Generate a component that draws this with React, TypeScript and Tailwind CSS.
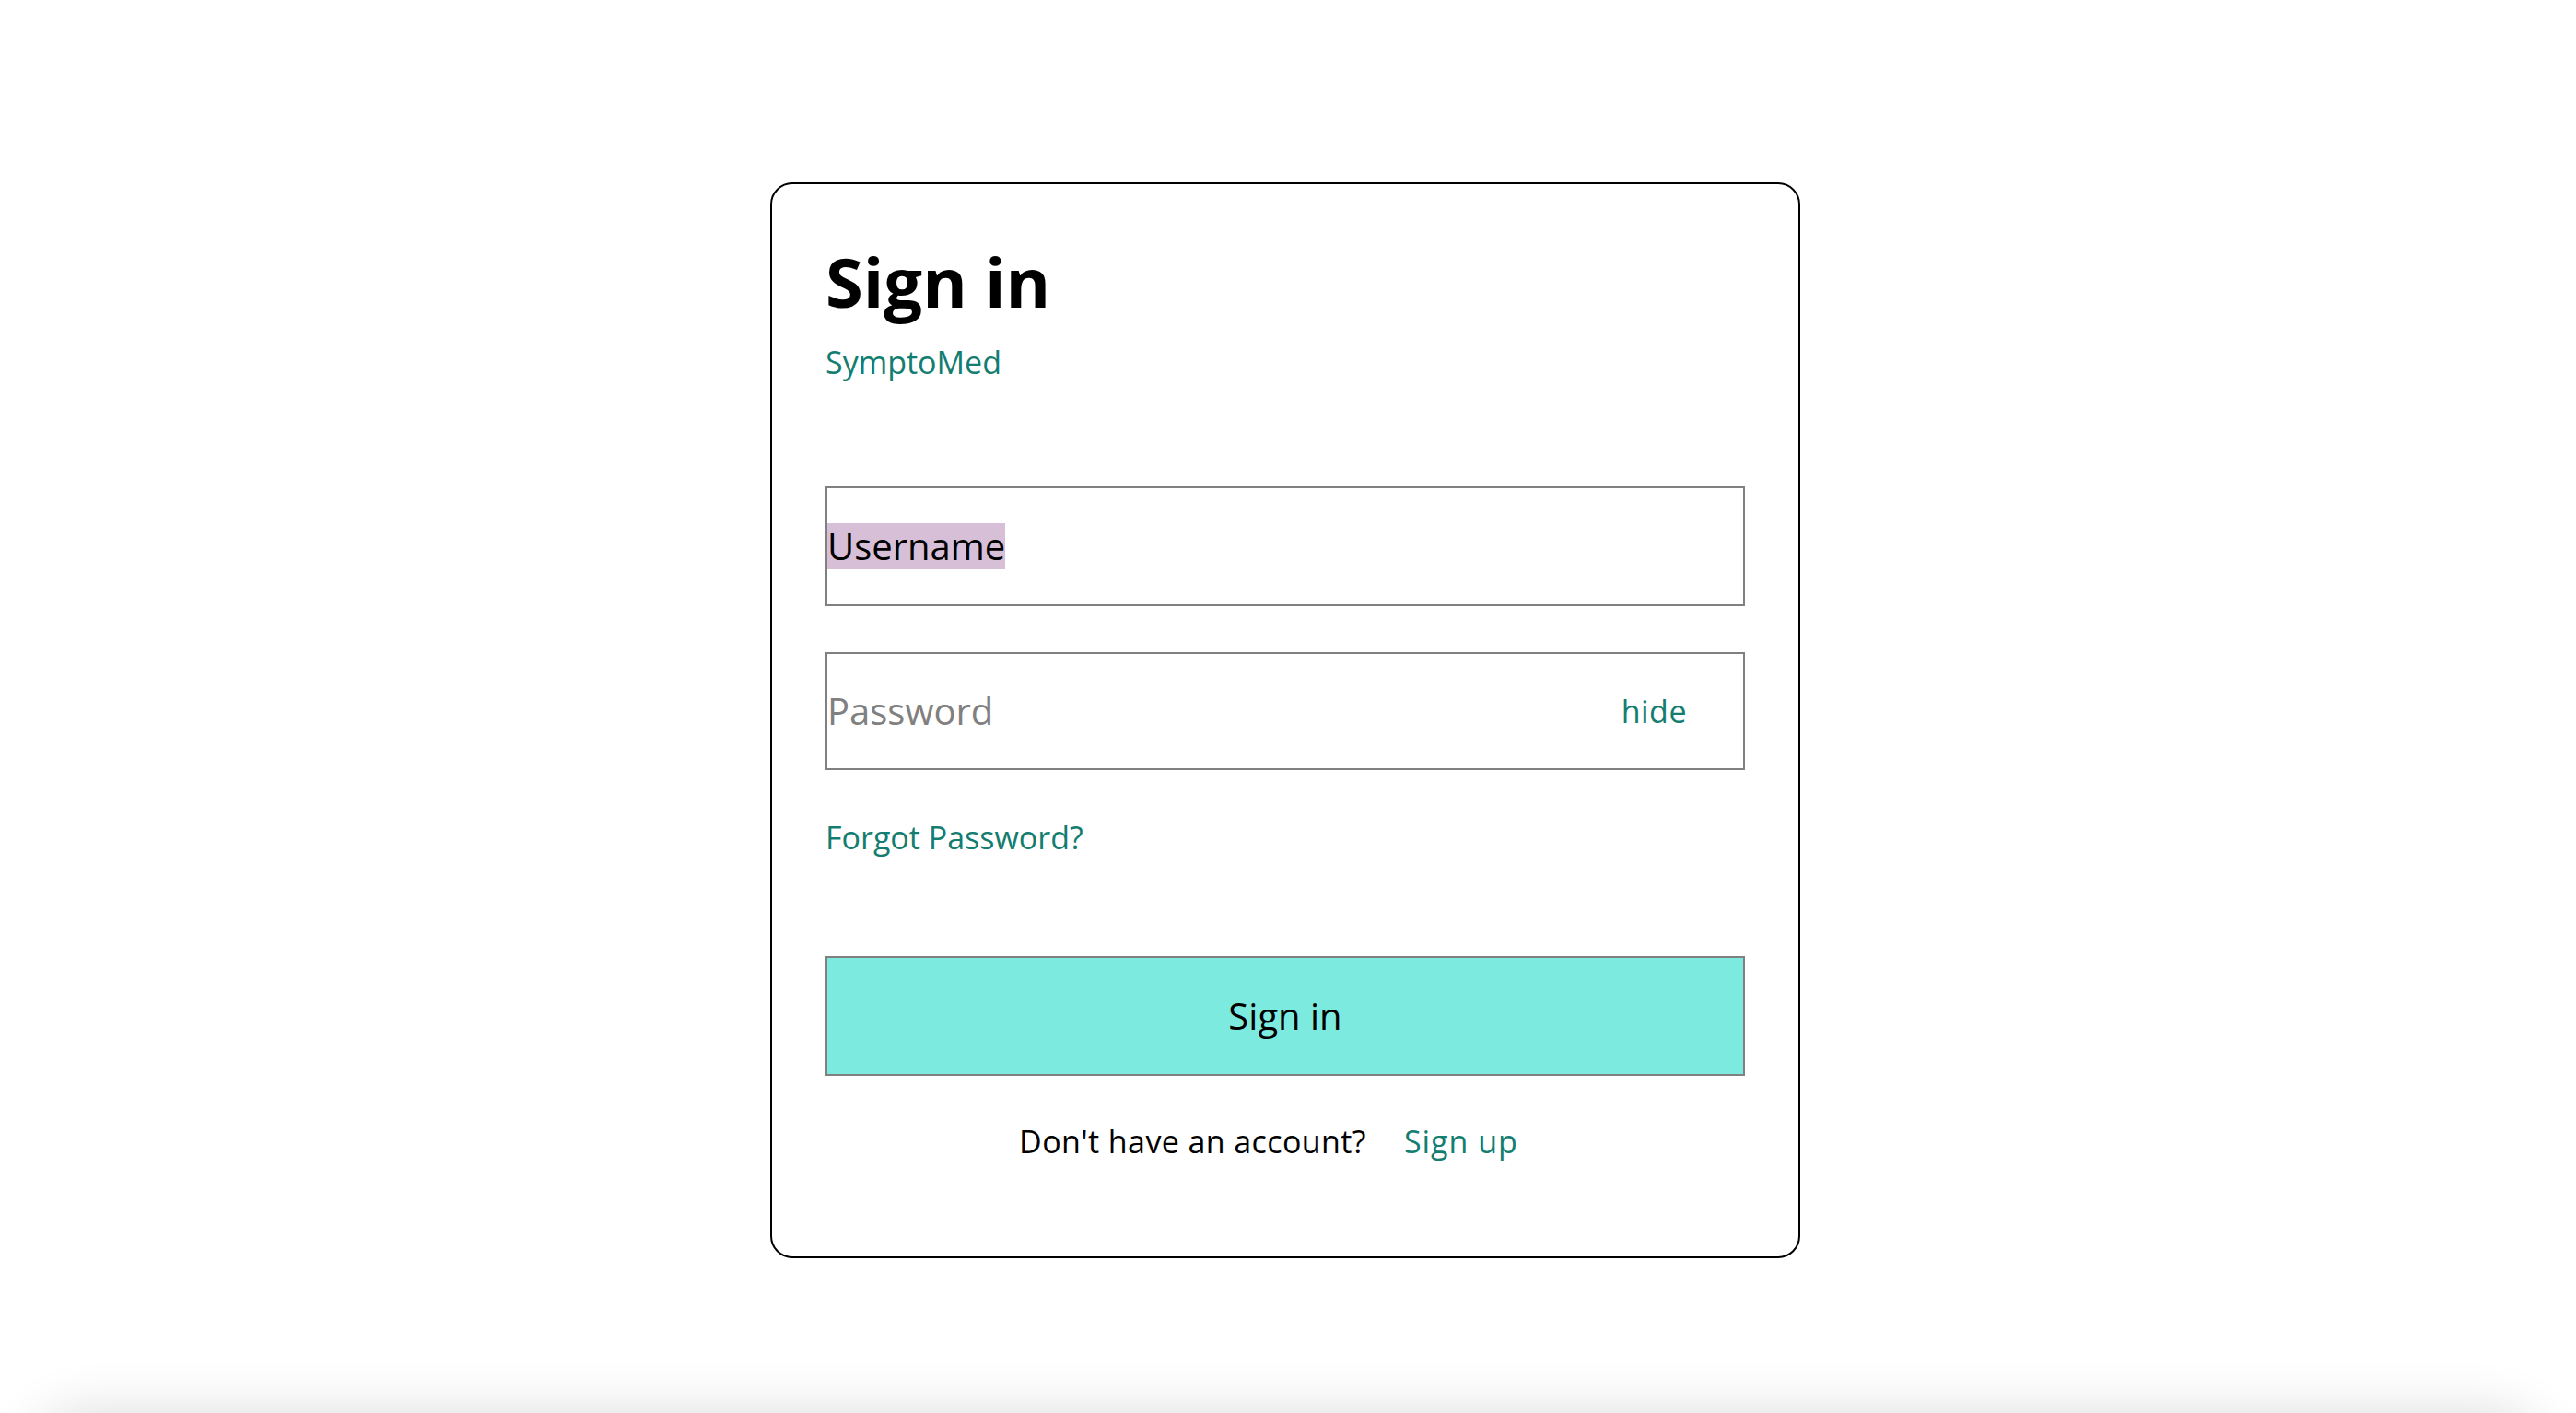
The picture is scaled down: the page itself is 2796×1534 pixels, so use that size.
export default function App() {
  return (
    <div className="bg-white font-['Open_Sans',sans-serif]">
      <main className="h-[1534px] flex justify-center pt-[198px] pr-[6px]">
        <div className="w-[1118px] h-[1168px] border-2 border-black rounded-[24px] bg-white px-[58px] pt-[69px] flex flex-col">
          <h1 className="text-[74px] leading-none font-bold text-black">Sign in</h1>
          <p className="mt-[33px] text-[34px] leading-none text-[#137d70]">SymptoMed</p>

          <div className="mt-[118px] h-[130px] border-2 border-[#808080] flex items-center">
            <span className="bg-[#d8bfd8] text-[40px] leading-[50px] text-black">Username</span>
          </div>

          <div className="mt-[50px] h-[128px] border-2 border-[#808080] flex items-center justify-between pr-[61px]">
            <span className="text-[40px] leading-[50px] text-[#808080]">Password</span>
            <span className="text-[34px] leading-none text-[#137d70] tracking-[0.5px]">hide</span>
          </div>

          <p className="mt-[56px] text-[34px] leading-none text-[#137d70]">Forgot Password?</p>

          <button className="mt-[112px] h-[130px] border-2 border-[#808080] bg-[#7deae0] text-[40px] text-black">
            Sign in
          </button>

          <div className="mt-[54px] flex justify-center gap-[41px] pr-[36px] text-[34px] leading-none tracking-[0.4px]">
            <span className="text-black">Don't have an account?</span>
            <span className="text-[#137d70] tracking-[1px]">Sign up</span>
          </div>
        </div>
      </main>
      <div className="mx-[40px] h-[120px] rounded-[48px] bg-white shadow-[0_0_60px_rgba(0,0,0,0.14)]" />
    </div>
  );
}
